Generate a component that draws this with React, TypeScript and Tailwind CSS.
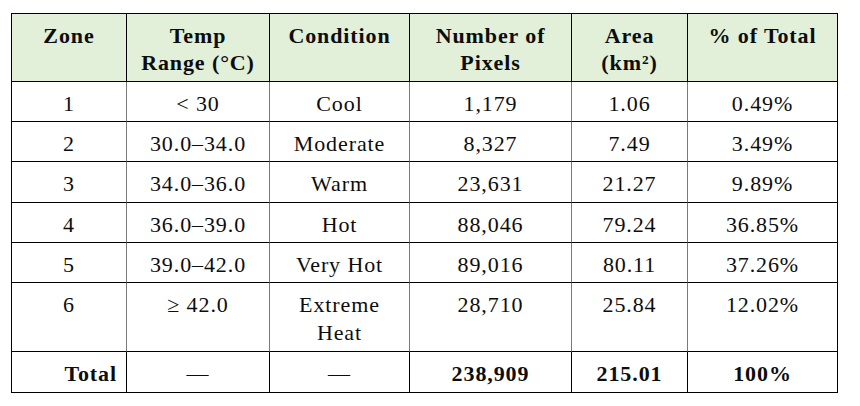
import React from "react";

type Row = { zone: string; range: string; cond: string[]; px: string; area: string; pct: string };

const rows: Row[] = [
  { zone: "1", range: "< 30", cond: ["Cool"], px: "1,179", area: "1.06", pct: "0.49%" },
  { zone: "2", range: "30.0–34.0", cond: ["Moderate"], px: "8,327", area: "7.49", pct: "3.49%" },
  { zone: "3", range: "34.0–36.0", cond: ["Warm"], px: "23,631", area: "21.27", pct: "9.89%" },
  { zone: "4", range: "36.0–39.0", cond: ["Hot"], px: "88,046", area: "79.24", pct: "36.85%" },
  { zone: "5", range: "39.0–42.0", cond: ["Very Hot"], px: "89,016", area: "80.11", pct: "37.26%" },
  { zone: "6", range: "≥ 42.0", cond: ["Extreme", "Heat"], px: "28,710", area: "25.84", pct: "12.02%" },
];

const th = "border-r border-b border-black bg-[#e2efd9] align-top text-center font-bold pt-[8px] pb-[5px] leading-[27px]";
const td = "border-r border-b border-r-[#7a7a7a] border-b-black align-top text-center pt-[8px] pb-[4px] leading-[27.2px]";
const tdLast = "border-r border-b border-black align-top text-center pt-[8px] pb-[4px] leading-[27.2px]";
const tt = "border-r border-b border-black align-top text-center font-bold pt-[8px] pb-[4px] leading-[28px]";

export default function App() {
  return (
    <div className="w-[860px] h-[406px] bg-white pt-[13px] pl-[11px] text-[#0d0d0d] text-[22px] tracking-[0.9px]" style={{ fontFamily: '"Liberation Serif", "Times New Roman", serif' }}>
      <table className="table-fixed border-separate border-spacing-0 border-l border-t border-black w-[826px]">
        <colgroup>
          <col className="w-[115px]" />
          <col className="w-[143px]" />
          <col className="w-[140px]" />
          <col className="w-[162px]" />
          <col className="w-[116px]" />
          <col className="w-[150px]" />
        </colgroup>
        <thead>
          <tr>
            <th className={th}>Zone</th>
            <th className={th}>Temp<br />Range (°C)</th>
            <th className={th}>Condition</th>
            <th className={th}>Number of<br />Pixels</th>
            <th className={th}>Area<br />(km²)</th>
            <th className={th}>% of Total</th>
          </tr>
        </thead>
        <tbody>
          {rows.map((r) => (
            <tr key={r.zone}>
              <td className={td}>{r.zone}</td>
              <td className={td}>{r.range}</td>
              <td className={td}>
                {r.cond.map((c, i) => (
                  <div key={i} className={r.cond.length > 1 ? "leading-[28px]" : ""}>{c}</div>
                ))}
              </td>
              <td className={td}>{r.px}</td>
              <td className={td}>{r.area}</td>
              <td className={tdLast}>{r.pct}</td>
            </tr>
          ))}
          <tr>
            <td className={`${tt} text-right pr-[9px]`}>Total</td>
            <td className={`${tt} font-normal`}>—</td>
            <td className={`${tt} font-normal`}>—</td>
            <td className={tt}>238,909</td>
            <td className={tt}>215.01</td>
            <td className={tt}>100%</td>
          </tr>
        </tbody>
      </table>
    </div>
  );
}
